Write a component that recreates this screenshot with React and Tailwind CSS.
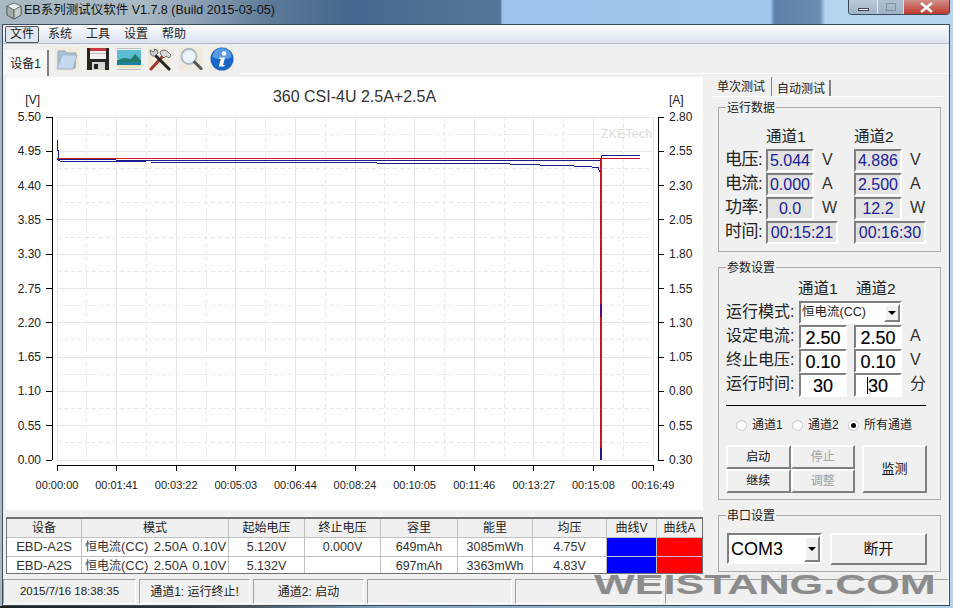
import React from "react";

const F = "font-['Liberation_Sans','Noto_Sans_CJK_SC',sans-serif]";
const X0 = 57, X1 = 653, Y0 = 117, Y1 = 460;
const left = ["5.50","4.95","4.40","3.85","3.30","2.75","2.20","1.65","1.10","0.55","0.00"];
const right = ["2.80","2.55","2.30","2.05","1.80","1.55","1.30","1.05","0.80","0.55","0.30"];
const times = ["00:00:00","00:01:41","00:03:22","00:05:03","00:06:44","00:08:24","00:10:05","00:11:46","00:13:27","00:15:08","00:16:49"];
const xs = times.map((_, i) => X0 + (i * (X1 - X0)) / 10);
const ys = left.map((_, i) => Y0 + (i * (Y1 - Y0)) / 10);

function Chart() {
  return (
    <svg width="697" height="433" viewBox="6 77 697 433" className="block bg-white">
      <g fill="none" shapeRendering="crispEdges">
        {ys.map((y, i) => (
          <g key={i}>
            <line x1={X0} x2={X1} y1={y} y2={y} stroke="#e6e6e6" />
            {i < 10 && <line x1={X0} x2={X1} y1={y + 17.15} y2={y + 17.15} stroke="#e8e8e8" strokeDasharray="4 3" />}
          </g>
        ))}
        {xs.map((x, i) => (
          <g key={i}>
            <line x1={x} x2={x} y1={Y0} y2={Y1} stroke="#e6e6e6" />
            {i < 10 && <line x1={x + 29.8} x2={x + 29.8} y1={Y0} y2={Y1} stroke="#e8e8e8" strokeDasharray="4 3" />}
            <line x1={x} x2={x} y1={465} y2={471} stroke="#000" />
          </g>
        ))}
        <line x1={X0} x2={X1} y1={465} y2={465} stroke="#000" />
        <line x1={52} x2={52} y1={Y0} y2={Y1} stroke="#000" />
        <line x1={658} x2={658} y1={Y0} y2={Y1} stroke="#000" />
        {ys.map((y, i) => (
          <g key={i}>
            <line x1={46} x2={52} y1={y} y2={y} stroke="#000" />
            <line x1={658} x2={664} y1={y} y2={y} stroke="#000" />
          </g>
        ))}
      </g>
      <text x="601" y="138" fontSize="12" letterSpacing="0.4" fill="#dcdcdc">ZKETech</text>
      <text x="354.5" y="102" fontSize="16" textAnchor="middle" fill="#333">360 CSI-4U 2.5A+2.5A</text>
      <text x="40" y="104" fontSize="12" textAnchor="end" fill="#222">[V]</text>
      <text x="669" y="104" fontSize="12" fill="#222">[A]</text>
      {left.map((t, i) => (
        <text key={t} x="41" y={ys[i] + 4} fontSize="12" textAnchor="end" fill="#222">{t}</text>
      ))}
      {right.map((t, i) => (
        <text key={t} x="669" y={ys[i] + 4} fontSize="12" fill="#222">{t}</text>
      ))}
      {times.map((t, i) => (
        <text key={t} x={xs[i]} y="489" fontSize="11" textAnchor="middle" fill="#222">{t}</text>
      ))}
      <g fill="none" strokeWidth="1" shapeRendering="crispEdges">
        <polyline stroke="#1c1c8e" points="57,140 57,150 58,150 58,160 60,161 145,161 146,162 310,162.5 510,164 540,165 573,165 574,166 590,166 592,167 598,167 599,170 600,172 600,180" />
        <polyline stroke="#1c1c8e" points="57,159 115,159 116,160 601,160 601,155 640,155" />
        <polyline stroke="#c81828" points="57,158 640,158" />
        <rect x="600" y="448" width="2" height="12" fill="#1c1c8e" stroke="none" />
        <rect x="600" y="158" width="2" height="290" fill="#c81828" stroke="none" />
        <rect x="600" y="304" width="2" height="13" fill="#5a0a80" stroke="none" />
      </g>
    </svg>
  );
}

const Sunken = "border-2 border-t-[#808080] border-l-[#808080] border-r-white border-b-white";
const Raised = "border-2 border-t-white border-l-white border-r-[#808080] border-b-[#808080]";

function Ro({ w, children }) {
  return (
    <div className={`${Sunken} ${w} h-[23px] bg-[#e3e3e3] text-[#1b1b96] text-base leading-[20px] text-center`}>
      {children}
    </div>
  );
}

function DataRow({ label, a, b, ua, ub, wide }) {
  const w = wide ? "w-[72px]" : "w-[48px]";
  return (
    <div className="flex h-[24px] items-start">
      <div className="w-[47px] pl-[6px] text-[17px] leading-[22px] text-[#222] whitespace-nowrap tracking-[-0.5px]">{label}</div>
      <Ro w={w}>{a}</Ro>
      <div className={`${wide ? "w-[16px]" : "w-[40px]"} pl-[8px] text-base leading-[22px] text-[#333]`}>{ua}</div>
      <Ro w={w}>{b}</Ro>
      <div className="pl-[8px] text-base leading-[22px] text-[#333]">{ub}</div>
    </div>
  );
}

function Inp({ children, caret }) {
  return (
    <div className={`${Sunken} w-[48px] h-[24px] bg-white text-lg leading-[23px] text-center text-black [-webkit-text-stroke:0.2px_#000] relative`}>
      {caret && <span className="absolute left-[11px] top-[2px] w-px h-[17px] bg-black" />}
      {children}
    </div>
  );
}

function ParamRow({ label, a, b, u, caret }) {
  return (
    <div className="flex h-[24px] items-start">
      <div className="w-[73px] text-base leading-[22px] text-[#222] whitespace-nowrap">{label}</div>
      <Inp>{a}</Inp>
      <div className="w-[7px]" />
      <Inp caret={caret}>{b}</Inp>
      <div className="pl-[8px] text-base leading-[22px] text-[#333]">{u}</div>
    </div>
  );
}

function Group({ title, className, children }) {
  return (
    <div className={`relative border border-[#a8a8a8] ${className}`}>
      <span className="absolute -top-[7px] left-[7px] bg-[#f0f0f0] px-[1px] text-xs leading-[14px] text-[#222]">{title}</span>
      {children}
    </div>
  );
}

function Radio({ label, on, w }) {
  return (
    <div className={`flex items-center ${w}`}>
      <span className="w-[11px] h-[11px] rounded-full border border-[#c4c4c4] bg-white flex items-center justify-center">
        {on && <span className="w-[5px] h-[5px] rounded-full bg-black" />}
      </span>
      <span className="ml-[5px] text-xs text-[#222] whitespace-nowrap">{label}</span>
    </div>
  );
}

function Btn({ children, off, className }) {
  return (
    <div className={`${Raised} bg-[#f0f0f0] flex items-center justify-center text-xs ${off ? "text-[#a0a0a0]" : "text-[#111]"} ${className}`}>
      {children}
    </div>
  );
}

function Icons() {
  return (
    <div className="flex items-center ml-[6px] mb-[3px] gap-[7px]">
      <svg width="24" height="24" viewBox="0 0 24 24">
        <rect width="24" height="24" fill="#efeadb" />
        <path d="M3 4h7l2 2h9l-1 15H3z" fill="#a9bfd6" stroke="#94a5b5" strokeWidth="1" />
        <path d="M7 8h15l-4 14H2z" fill="#c5daf0" stroke="#9fb4c9" strokeWidth="1" />
      </svg>
      <svg width="24" height="24" viewBox="0 0 24 24">
        <rect width="24" height="24" fill="#f0ecdf" />
        <path d="M1 1h22v22H1z" fill="#262626" />
        <rect x="4" y="1" width="16" height="3" fill="#c93a40" />
        <rect x="4" y="4" width="16" height="8" fill="#f4f0ee" />
        <rect x="4" y="6" width="16" height="1" fill="#bbb" />
        <rect x="6" y="15" width="13" height="8" fill="#d4d4d4" />
        <rect x="8" y="17" width="4" height="5" fill="#222" />
      </svg>
      <svg width="24" height="24" viewBox="0 0 24 24">
        <rect width="24" height="24" fill="#f2f0e8" />
        <rect x="0" y="1" width="24" height="1" fill="#b8c0c4" />
        <rect x="0" y="3" width="24" height="9" fill="#5cbcd0" />
        <path d="M0 13l7-2 7 1 4-5 6 6v2H0z" fill="#1f7c68" />
        <rect x="0" y="15" width="24" height="3" fill="#1f7fa0" />
        <rect x="0" y="18" width="24" height="3" fill="#ece4bc" />
        <rect x="0" y="22" width="24" height="1" fill="#b8c0c4" />
      </svg>
      <svg width="24" height="24" viewBox="0 0 24 24">
        <rect width="24" height="24" fill="#efeadb" />
        <path d="M3 22L15 9" stroke="#a83428" strokeWidth="3" strokeLinecap="round" />
        <path d="M12 5q4-4 8 0l3 3-2 3-3-2-2 2-3-3z" fill="#d8d8d8" stroke="#555" strokeWidth="0.8" />
        <path d="M21 22L8 9" stroke="#222" strokeWidth="3" strokeLinecap="round" />
        <path d="M2 3l3 2 2-2-1-1q4 0 4 4l-3 3q-5 1-5-6z" fill="#cfcfcf" stroke="#555" strokeWidth="0.8" />
      </svg>
      <svg width="24" height="24" viewBox="0 0 24 24">
        <rect width="24" height="24" fill="#efeadb" />
        <circle cx="10" cy="9.5" r="7.5" fill="#eaf3fb" stroke="#a9b7c4" strokeWidth="1.8" />
        <path d="M15.5 15L22 21.5" stroke="#555" strokeWidth="3" strokeLinecap="round" />
      </svg>
      <svg width="24" height="24" viewBox="0 0 24 24">
        <rect width="24" height="24" fill="#efeadb" />
        <circle cx="12" cy="12" r="11.5" fill="#1a66c8" />
        <path d="M2.5 10a9.5 9 0 0 1 19 0c-5 3-14 3-19 0z" fill="#5a9ce4" />
        <circle cx="14" cy="6.5" r="2.2" fill="#fff" />
        <path d="M9.5 10.5h5.5l-2 7.5h1.8l-.5 1.6H8.8l2-7.6H9.2z" fill="#fff" />
      </svg>
    </div>
  );
}

const cols = [75, 147, 76, 76, 77, 75, 74, 50, 46];
const TH = "border border-[#c0c0c0] font-normal text-xs leading-[16px] text-[#222] text-center p-0";
const TD = "border border-[#c0c0c0] text-[12.5px] leading-[16px] text-[#333] text-center p-0 whitespace-pre";
const rows = [
  ["EBD-A2S", "5.120V", "0.000V", "649mAh", "3085mWh", "4.75V"],
  ["EBD-A2S", "5.132V", "", "697mAh", "3363mWh", "4.83V"],
];

function DataTable() {
  return (
    <div className="mt-[7px] h-[57px] w-[697px] border-t-2 border-l border-[#707070] border-r border-b overflow-hidden">
      <table className="table-fixed border-collapse w-[696px] -mt-px -ml-px">
        <colgroup>{cols.map((c, i) => <col key={i} style={{ width: c }} />)}</colgroup>
        <thead>
          <tr className="h-[19px] bg-[#f0f0f0]">
            {["设备","模式","起始电压","终止电压","容里","能里","均压","曲线V","曲线A"].map((h) => (
              <th key={h} className={TH}>{h}</th>
            ))}
          </tr>
        </thead>
        <tbody>
          {rows.map((r, i) => (
            <tr key={i} className="h-[19px] bg-white">
              <td className={`${TD} !text-[13px]`}>{r[0]}</td>
              <td className={`${TD} !text-left pl-[3px] !text-[13px] [word-spacing:-1px]`}><span className="text-xs">恒电流</span>(CC)  2.50A  0.10V</td>
              <td className={TD}>{r[1]}</td>
              <td className={TD}>{r[2]}</td>
              <td className={TD}>{r[3]}</td>
              <td className={TD}>{r[4]}</td>
              <td className={TD}>{r[5]}</td>
              <td className={`${TD} bg-[#0000ff]`} />
              <td className={`${TD} bg-[#ff0000]`} />
            </tr>
          ))}
        </tbody>
      </table>
    </div>
  );
}

const SP = "h-[25px] border border-t-[#a0a0a0] border-l-[#a0a0a0] border-r-white border-b-white flex items-center justify-center text-xs text-[#222] whitespace-nowrap";

export default function App() {
  return (
    <div className={`${F} relative w-[953px] h-[608px] overflow-hidden flex flex-col bg-[linear-gradient(90deg,#a9b9c4_0%,#a9b9c4_15%,#8a9fb3_21%,#5d7a98_28.3%,#44688f_36.7%,#557799_52.5%,#9cc4ea_52.7%,#a0c8ec_80.8%,#5c80a8_81.3%,#6a8cb0_86%,#b4d4f0_86.6%,#b4d4f0_100%)]`}>
      {/* title bar */}
      <div className="h-[24px] flex items-start relative shrink-0">
        <svg width="18" height="18" viewBox="0 0 18 18" className="ml-[5px] mt-[2px]">
          <path d="M9 1l7 3v9l-7 4-7-4V4z" fill="#e9ecec" stroke="#555" strokeWidth="0.8" />
          <path d="M9 8v9l-7-4V4z" fill="#9fb0a8" stroke="#555" strokeWidth="0.8" />
          <path d="M9 8l7-4v9l-7 4z" fill="#c4d0cc" stroke="#555" strokeWidth="0.8" />
        </svg>
        <span className="ml-[1px] mt-[1px] text-[12.5px] leading-[18px] text-[#111] whitespace-nowrap">EB系列测试仪软件 V1.7.8 (Build 2015-03-05)</span>
        <div className="ml-auto mr-[3px] flex h-[15px] w-[102px] rounded-b-[4px] border border-t-0 border-[#3c4a5a] overflow-hidden">
          <div className="w-[29px] bg-[linear-gradient(180deg,#bccbd9,#9fb4c8)] border-r border-[#e4ecf2] flex items-center justify-center">
            <span className="w-[11px] h-[3px] mt-[5px] bg-white border border-[#445]" />
          </div>
          <div className="w-[26px] bg-[linear-gradient(180deg,#b0c2d2,#9cb2c6)] border-r border-[#d4dfe8] flex items-center justify-center">
            <span className="w-[10px] h-[8px] border border-[#7f93a5]" />
          </div>
          <div className="flex-1 bg-[linear-gradient(180deg,#d0908a,#c0392b)] flex items-center justify-center">
            <svg width="15" height="11" viewBox="0 0 15 11"><path d="M2 1l11 9M13 1L2 10" stroke="#fff" strokeWidth="2.6" /></svg>
          </div>
        </div>
      </div>

      {/* window */}
      <div className="ml-[2px] w-[948px] h-[582px] border border-[#3d4c5c] flex flex-col bg-[#f0f0f0] shrink-0">
        {/* menu */}
        <div className="h-[19px] bg-[linear-gradient(180deg,#fbfcfe,#dbe3f0)] border-b border-[#b4bccc] flex items-center pl-[2px] text-xs leading-[17px] text-[#222] shrink-0">
          <span className="w-[34px] h-[17px] border border-[#555] rounded-[2px] bg-[#dfe6f0] flex items-center justify-center pt-px">文件</span>
          <span className="ml-[9px] pt-px">系统</span>
          <span className="ml-[14px] pt-px">工具</span>
          <span className="ml-[14px] pt-px">设置</span>
          <span className="ml-[14px] pt-px">帮助</span>
        </div>
        {/* toolbar */}
        <div className="h-[30px] flex items-end shrink-0 relative">
          <div className="w-[46px] h-[26px] bg-[#f8f8f8] border-r-2 border-[#808080] flex items-center justify-center text-xs text-[#222] -mb-[2px] pt-[2px] pl-[1px]">设备1</div>
          <Icons />
          <div className="absolute left-[237px] right-0 bottom-0 h-px bg-white" />
        </div>
        {/* main */}
        <div className="h-[502px] flex shrink-0">
          <div className="w-[702px] pl-[3px] pt-[3px]">
            <Chart />
            <DataTable />
          </div>
          <div className="pl-[7px] pt-[3px] w-[244px]">
            <div className="h-[20px] flex items-end border-b border-white w-[231px]">
              <div className="w-[60px] h-[19px] pl-[5px] text-xs leading-[20px] text-[#222] border-r border-[#808080] bg-[#f0f0f0] whitespace-nowrap">单次测试</div>
              <div className="ml-px w-[58px] h-[16px] pl-[4px] text-xs leading-[18px] text-[#222] border-r-2 border-[#808080] whitespace-nowrap">自动测试</div>
            </div>
            <Group title="运行数据" className="ml-[6px] mt-[10px] w-[223px] h-[145px] pt-[18px]">
              <div className="flex h-[23px] pl-[47px] text-[15.5px] leading-[22px] text-[#222]">
                <span className="w-[88px]">通道1</span>
                <span>通道2</span>
              </div>
              <DataRow label="电压:" a="5.044" b="4.886" ua="V" ub="V" />
              <DataRow label="电流:" a="0.000" b="2.500" ua="A" ub="A" />
              <DataRow label="功率:" a="0.0" b="12.2" ua="W" ub="W" />
              <DataRow label="时间:" a="00:15:21" b="00:16:30" wide />
            </Group>
            <Group title="参数设置" className="ml-[6px] mt-[15px] w-[223px] h-[233px] pl-[7px]">
              <div className="flex h-[33px] pt-[10px] pl-[72px] text-[15.5px] leading-[22px] text-[#222]">
                <span className="w-[58px]">通道1</span>
                <span>通道2</span>
              </div>
              <div className="flex h-[24px] items-start">
                <div className="w-[73px] text-base leading-[22px] text-[#222] whitespace-nowrap">运行模式:</div>
                <div className={`${Sunken} w-[103px] h-[23px] bg-white flex items-center text-[12.5px] text-[#222] pl-[1px]`}>
                  <span className="flex-1">恒电流(CC)</span>
                  <span className={`${Raised} w-[16px] h-[18px] bg-[#f0f0f0] flex items-center justify-center`}>
                    <span className="border-x-[4px] border-x-transparent border-t-[4px] border-t-black" />
                  </span>
                </div>
              </div>
              <ParamRow label="设定电流:" a="2.50" b="2.50" u="A" />
              <ParamRow label="终止电压:" a="0.10" b="0.10" u="V" />
              <ParamRow label="运行时间:" a="30" b="30" u="分" caret />
              <div className="mt-[8px] w-[200px] h-px bg-black" />
              <div className="flex mt-[11px] pl-[10px] h-[16px]">
                <Radio label="通道1" w="w-[56px]" />
                <Radio label="通道2" w="w-[56px]" />
                <Radio label="所有通道" on />
              </div>
              <div className="flex mt-[12px]">
                <div className="grid grid-cols-2 w-[129px] h-[48px]">
                  <Btn>启动</Btn>
                  <Btn off>停止</Btn>
                  <Btn>继续</Btn>
                  <Btn off>调整</Btn>
                </div>
                <Btn className="ml-[7px] w-[65px] h-[48px] !text-[13px]">监测</Btn>
              </div>
            </Group>
            <Group title="串口设置" className="ml-[6px] mt-[15px] w-[223px] h-[57px] pt-[17px] pl-[8px]">
              <div className="flex">
                <div className={`${Sunken} w-[95px] h-[31px] bg-white flex items-center pl-[2px] text-lg text-black`}>
                  <span className="flex-1">COM3</span>
                  <span className={`${Raised} w-[16px] h-[26px] bg-[#f0f0f0] flex items-center justify-center`}>
                    <span className="border-x-[4px] border-x-transparent border-t-[4px] border-t-black" />
                  </span>
                </div>
                <Btn className="ml-[8px] w-[97px] h-[32px] !text-[15px]">断开</Btn>
              </div>
            </Group>
          </div>
        </div>
        {/* status */}
        <div className="flex gap-[3px] flex-1 items-start pt-[3px]">
          <div className={`${SP} w-[133px] !text-[11.5px]`}>2015/7/16 18:38:35</div>
          <div className={`${SP} w-[111px]`}>通道1: 运行终止!</div>
          <div className={`${SP} w-[111px]`}>通道2: 启动</div>
          <div className={`${SP} w-[145px]`} />
          <div className={`${SP} w-[147px]`} />
          <div className={`${SP} flex-1`} />
        </div>
      </div>
      <div className="flex-1 bg-[linear-gradient(90deg,#222_0%,#333_20%,#7ea2c0_40%,#b4d0e4_100%)]" />

      {/* watermark */}
      <div className="absolute left-[594px] top-[569px] origin-left scale-x-[1.54] text-[28px] leading-[32px] font-bold text-[#8c8c8c] whitespace-nowrap [text-shadow:0_0_1px_#ddd]">
        WEISTANG.COM
      </div>
    </div>
  );
}
